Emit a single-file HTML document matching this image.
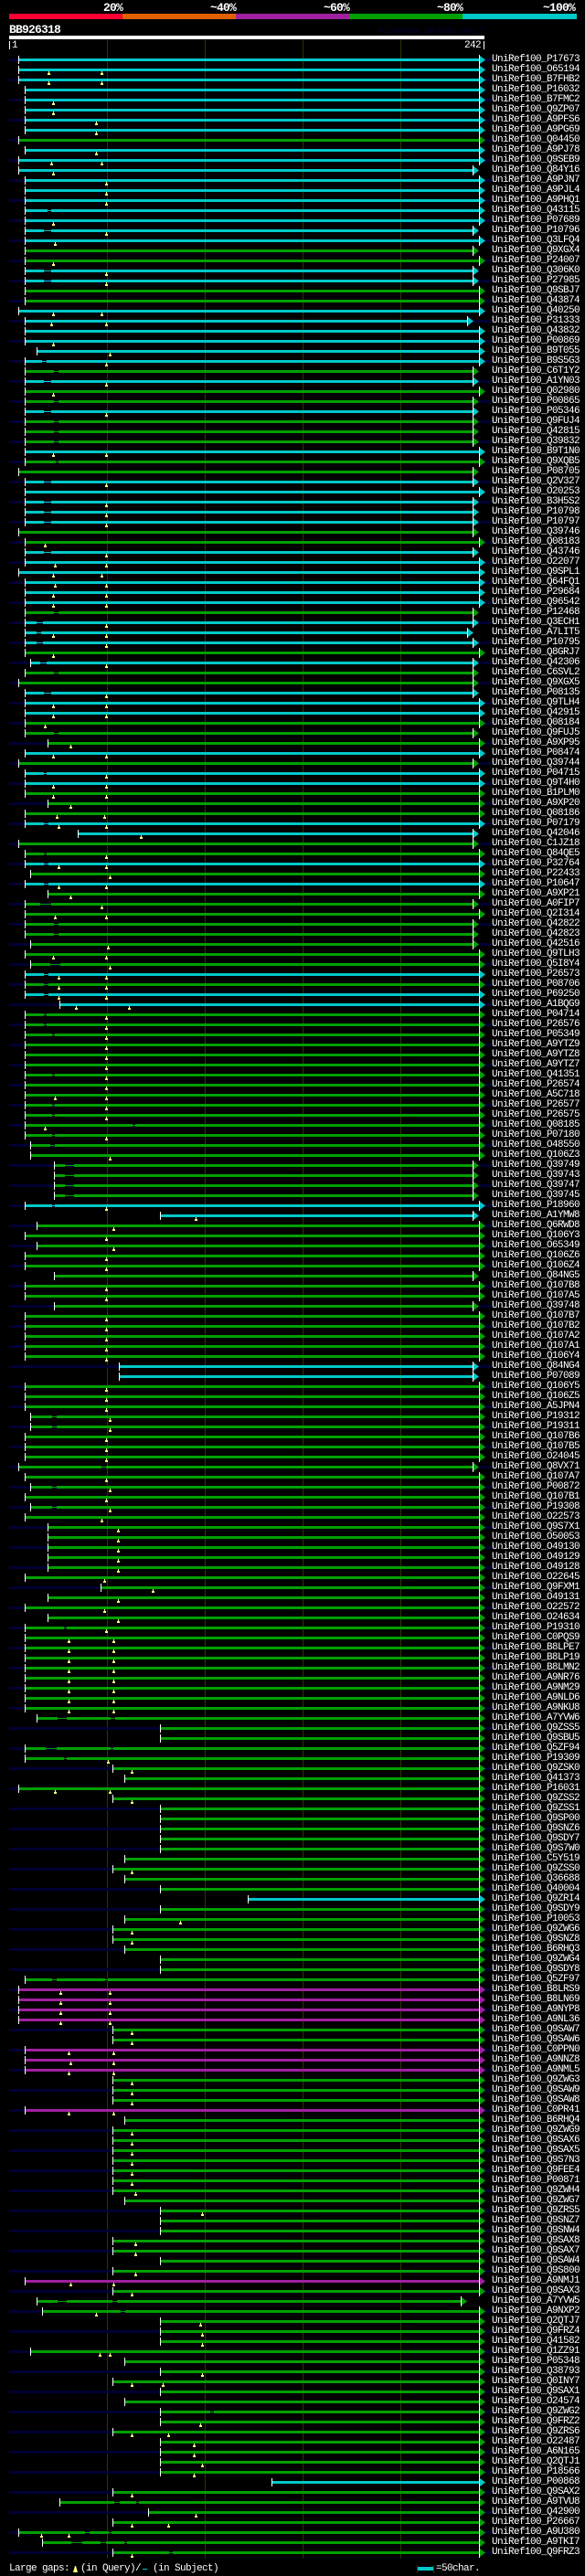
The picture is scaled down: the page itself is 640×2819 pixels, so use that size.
<!DOCTYPE html>
<html><head><meta charset="utf-8"><title>BB926318</title>
<style>
html,body{margin:0;padding:0;background:#000;}
#w{position:relative;width:640px;height:2819px;overflow:hidden;background:#000;color:#fff;font-family:"Liberation Mono",monospace;}
#w div{position:absolute;}
.h{font-weight:bold;font-size:13px;letter-spacing:-.8px;line-height:13px;white-space:pre;}
.t{font-size:11px;letter-spacing:-.6px;line-height:11px;white-space:pre;}
.v{width:1px;top:44px;height:2756px;background:#333300;}
#r{left:0;top:60px;width:640px;}
p{margin:0;position:relative;height:11px;padding-left:538px;font-size:11px;letter-spacing:-.6px;line-height:11px;white-space:pre;--e:524;--n:transparent;--b:#000;
background:linear-gradient(#fff,#fff) calc(var(--s)*1px) 1px/1px 9px no-repeat,
linear-gradient(var(--k),var(--k)) calc(var(--s)*1px + 1px) 4px/calc((var(--e) - var(--s) - 1)*1px) 3px no-repeat,
linear-gradient(var(--n),var(--n)) 10px 4px/528px 3px no-repeat;}
p:nth-child(odd){--n:#000033;--b:#000033;}
p::before{content:"";position:absolute;left:calc(var(--e)*1px);top:0;width:1px;height:11px;background:#fff;}
p::after{content:"";position:absolute;left:calc(var(--e)*1px + 1px);top:1px;width:6px;height:9px;background:var(--k);clip-path:polygon(0 0,100% 50%,0 100%);}
.c{--k:#00c8c8;}.g{--k:#00a000;}.m{--k:#a020a0;}
s{position:absolute;top:7px;width:1px;height:2px;background:#ffff80;text-decoration:none;}
s::after{content:"";position:absolute;left:-1px;top:2px;width:3px;height:2px;background:#ffff80;}
u{position:absolute;top:4px;height:3px;text-decoration:none;background:linear-gradient(var(--b) 1px,var(--k) 1px,var(--k) 2px,var(--b) 2px);}
</style></head><body><div id="w">
<div class="h" style="left:113px;top:2px">20%</div>
<div class="h" style="left:230px;top:2px">~40%</div>
<div class="h" style="left:354px;top:2px">~60%</div>
<div class="h" style="left:478px;top:2px">~80%</div>
<div class="h" style="left:594px;top:2px">~100%</div>
<div style="left:10px;top:15px;width:124px;height:6px;background:#ff0033"></div>
<div style="left:134px;top:15px;width:124px;height:6px;background:#e06000"></div>
<div style="left:258px;top:15px;width:124px;height:6px;background:#a020a0"></div>
<div style="left:382px;top:15px;width:124px;height:6px;background:#00a000"></div>
<div style="left:506px;top:15px;width:125px;height:6px;background:#00c8c8"></div>
<div class="h" style="left:10px;top:26px">BB926318</div>
<div style="left:414px;top:30px;font-size:9px;letter-spacing:-.4px;line-height:9px;color:#00003a;white-space:pre">AlignView.pm Beta rel.7</div>
<div style="left:10px;top:39px;width:520px;height:4px;background:#fff"></div>
<div style="left:10px;top:45px;width:1px;height:9px;background:#fff"></div>
<div class="t" style="left:13px;top:45px">1</div>
<div class="t" style="left:508px;top:45px">242</div>
<div style="left:529px;top:45px;width:1px;height:9px;background:#fff"></div>
<div class="v" style="left:117px"></div><div class="v" style="left:224px"></div><div class="v" style="left:331px"></div><div class="v" style="left:438px"></div>
<div id="r">
<p class=c style=--s:20>UniRef100_P17673</p>
<p class=c style=--s:20><s style=left:53px></s><s style=left:111px></s>UniRef100_O65194</p>
<p class=c style=--s:20><s style=left:53px></s><s style=left:111px></s>UniRef100_B7FHB2</p>
<p class=c style=--s:27>UniRef100_P16032</p>
<p class=c style=--s:27><s style=left:58px></s>UniRef100_B7FMC2</p>
<p class=c style=--s:27><s style=left:58px></s>UniRef100_Q9ZP07</p>
<p class=c style=--s:27><s style=left:105px></s>UniRef100_A9PFS6</p>
<p class=c style=--s:27><s style=left:105px></s>UniRef100_A9PG69</p>
<p class=g style=--s:20>UniRef100_Q04450</p>
<p class=c style=--s:27><s style=left:105px></s>UniRef100_A9PJ78</p>
<p class=c style=--s:20><s style=left:56px></s><s style=left:111px></s>UniRef100_Q9SEB9</p>
<p class=c style=--s:20;--e:517><s style=left:58px></s>UniRef100_Q84Y16</p>
<p class=c style=--s:27><s style=left:116px></s>UniRef100_A9PJN7</p>
<p class=c style=--s:27><s style=left:116px></s>UniRef100_A9PJL4</p>
<p class=c style=--s:27><s style=left:116px></s>UniRef100_A9PHQ1</p>
<p class=c style=--s:27><u style=left:52px;width:4px></u>UniRef100_Q43115</p>
<p class=c style=--s:27><s style=left:58px></s>UniRef100_P07689</p>
<p class=c style=--s:27;--e:517><u style=left:48px;width:8px></u><s style=left:116px></s>UniRef100_P10796</p>
<p class=c style=--s:27><s style=left:60px></s>UniRef100_Q3LFQ4</p>
<p class=g style=--s:27;--e:517>UniRef100_Q9XGX4</p>
<p class=g style=--s:27><s style=left:58px></s>UniRef100_P24007</p>
<p class=c style=--s:27;--e:517><u style=left:48px;width:8px></u><s style=left:116px></s>UniRef100_Q306K0</p>
<p class=c style=--s:27;--e:517><u style=left:48px;width:8px></u><s style=left:116px></s>UniRef100_P27985</p>
<p class=g style=--s:27>UniRef100_Q9SBJ7</p>
<p class=g style=--s:27>UniRef100_Q43874</p>
<p class=c style=--s:20><s style=left:58px></s><s style=left:111px></s>UniRef100_Q40250</p>
<p class=c style=--s:27;--e:511><s style=left:56px></s><s style=left:116px></s>UniRef100_P31333</p>
<p class=c style=--s:27>UniRef100_Q43832</p>
<p class=c style=--s:27><s style=left:58px></s>UniRef100_P00869</p>
<p class=c style=--s:40><s style=left:120px></s>UniRef100_B9T055</p>
<p class=c style=--s:27><u style=left:46px;width:5px></u><s style=left:116px></s>UniRef100_B9S5G3</p>
<p class=g style=--s:27;--e:517><u style=left:59px;width:5px></u>UniRef100_C6T1Y2</p>
<p class=c style=--s:27;--e:517><u style=left:48px;width:8px></u><s style=left:116px></s>UniRef100_A1YN03</p>
<p class=g style=--s:27><s style=left:58px></s>UniRef100_Q02980</p>
<p class=g style=--s:27;--e:517><u style=left:59px;width:5px></u>UniRef100_P00865</p>
<p class=c style=--s:27;--e:517><u style=left:48px;width:8px></u><s style=left:116px></s>UniRef100_P05346</p>
<p class=g style=--s:27;--e:517><u style=left:59px;width:5px></u>UniRef100_Q9FUJ4</p>
<p class=g style=--s:27;--e:517><u style=left:59px;width:5px></u>UniRef100_Q42815</p>
<p class=g style=--s:27;--e:517><u style=left:59px;width:5px></u>UniRef100_Q39832</p>
<p class=c style=--s:27><s style=left:58px></s><s style=left:116px></s>UniRef100_B9T1N0</p>
<p class=g style=--s:27><u style=left:61px;width:3px></u>UniRef100_Q9XQB5</p>
<p class=g style=--s:20;--e:517>UniRef100_P08705</p>
<p class=c style=--s:27;--e:517><u style=left:48px;width:8px></u><s style=left:116px></s>UniRef100_Q2V327</p>
<p class=c style=--s:27>UniRef100_O20253</p>
<p class=c style=--s:27;--e:517><u style=left:48px;width:8px></u><s style=left:116px></s>UniRef100_B3H5S2</p>
<p class=c style=--s:27;--e:517><u style=left:48px;width:8px></u><s style=left:116px></s>UniRef100_P10798</p>
<p class=c style=--s:27;--e:517><u style=left:48px;width:8px></u><s style=left:116px></s>UniRef100_P10797</p>
<p class=g style=--s:20;--e:517>UniRef100_Q39746</p>
<p class=g style=--s:27><s style=left:49px></s>UniRef100_Q08183</p>
<p class=c style=--s:27;--e:517><u style=left:48px;width:8px></u><s style=left:116px></s>UniRef100_Q43746</p>
<p class=c style=--s:27><s style=left:60px></s><s style=left:116px></s>UniRef100_O22077</p>
<p class=c style=--s:20><s style=left:58px></s><s style=left:111px></s>UniRef100_Q9SPL1</p>
<p class=c style=--s:27><s style=left:60px></s><s style=left:116px></s>UniRef100_Q64FQ1</p>
<p class=c style=--s:27><s style=left:58px></s><s style=left:116px></s>UniRef100_P29684</p>
<p class=c style=--s:27><s style=left:58px></s><s style=left:116px></s>UniRef100_Q96542</p>
<p class=g style=--s:27;--e:517><u style=left:59px;width:5px></u>UniRef100_P12468</p>
<p class=c style=--s:27;--e:517><u style=left:40px;width:7px></u><s style=left:116px></s>UniRef100_Q3ECH1</p>
<p class=c style=--s:27;--e:511><u style=left:40px;width:5px></u><s style=left:58px></s><s style=left:116px></s>UniRef100_A7LIT5</p>
<p class=c style=--s:27;--e:517><u style=left:40px;width:7px></u><s style=left:116px></s>UniRef100_P10795</p>
<p class=g style=--s:27><s style=left:58px></s>UniRef100_Q8GRJ7</p>
<p class=c style=--s:33;--e:517><u style=left:44px;width:7px></u><s style=left:116px></s>UniRef100_Q42306</p>
<p class=g style=--s:27;--e:517><u style=left:59px;width:5px></u>UniRef100_C6SVL2</p>
<p class=g style=--s:20;--e:517>UniRef100_Q9XGX5</p>
<p class=c style=--s:27;--e:517><u style=left:48px;width:8px></u><s style=left:116px></s>UniRef100_P08135</p>
<p class=c style=--s:27><s style=left:58px></s><s style=left:116px></s>UniRef100_Q9TLH4</p>
<p class=c style=--s:27><s style=left:58px></s><s style=left:116px></s>UniRef100_Q42915</p>
<p class=g style=--s:27><s style=left:49px></s>UniRef100_Q08184</p>
<p class=g style=--s:27;--e:517><u style=left:59px;width:5px></u>UniRef100_Q9FUJ5</p>
<p class=g style=--s:52><s style=left:77px></s>UniRef100_A9XP95</p>
<p class=c style=--s:27><s style=left:58px></s><s style=left:116px></s>UniRef100_P08474</p>
<p class=g style=--s:20;--e:517>UniRef100_Q39744</p>
<p class=c style=--s:27><u style=left:48px;width:3px></u><s style=left:116px></s>UniRef100_P04715</p>
<p class=c style=--s:27><s style=left:58px></s><s style=left:116px></s>UniRef100_Q9T4H0</p>
<p class=g style=--s:27><s style=left:58px></s><s style=left:116px></s>UniRef100_B1PLM0</p>
<p class=g style=--s:52><s style=left:77px></s>UniRef100_A9XP20</p>
<p class=g style=--s:27><s style=left:62px></s><s style=left:114px></s>UniRef100_Q08186</p>
<p class=c style=--s:27><u style=left:48px;width:5px></u><s style=left:64px></s><s style=left:116px></s>UniRef100_P07179</p>
<p class=c style=--s:85;--e:517><s style=left:154px></s>UniRef100_Q42046</p>
<p class=g style=--s:20;--e:517>UniRef100_C1JZ18</p>
<p class=g style=--s:27><u style=left:48px;width:3px></u><s style=left:116px></s>UniRef100_Q84QE5</p>
<p class=c style=--s:27><u style=left:48px;width:5px></u><s style=left:64px></s><s style=left:116px></s>UniRef100_P32764</p>
<p class=g style=--s:33><s style=left:120px></s>UniRef100_P22433</p>
<p class=c style=--s:27><u style=left:48px;width:5px></u><s style=left:64px></s><s style=left:116px></s>UniRef100_P10647</p>
<p class=g style=--s:52><s style=left:77px></s>UniRef100_A9XP21</p>
<p class=g style=--s:27;--e:517><u style=left:44px;width:12px></u><s style=left:111px></s>UniRef100_A0FIP7</p>
<p class=g style=--s:27><s style=left:60px></s><s style=left:116px></s>UniRef100_Q2I314</p>
<p class=g style=--s:27;--e:517><u style=left:59px;width:5px></u>UniRef100_Q42822</p>
<p class=g style=--s:27;--e:517><u style=left:59px;width:5px></u>UniRef100_Q42823</p>
<p class=g style=--s:33;--e:517><s style=left:118px></s>UniRef100_Q42516</p>
<p class=g style=--s:27><s style=left:58px></s><s style=left:116px></s>UniRef100_Q9TLH3</p>
<p class=g style=--s:33><u style=left:55px;width:11px></u><s style=left:120px></s>UniRef100_Q5I8Y4</p>
<p class=c style=--s:27><u style=left:48px;width:5px></u><s style=left:64px></s><s style=left:116px></s>UniRef100_P26573</p>
<p class=g style=--s:27><u style=left:48px;width:5px></u><s style=left:64px></s><s style=left:116px></s>UniRef100_P08706</p>
<p class=c style=--s:27><u style=left:48px;width:5px></u><s style=left:64px></s><s style=left:116px></s>UniRef100_P69250</p>
<p class=c style=--s:65><s style=left:83px></s><s style=left:141px></s>UniRef100_A1BQG9</p>
<p class=g style=--s:27><u style=left:48px;width:3px></u><s style=left:116px></s>UniRef100_P04714</p>
<p class=g style=--s:27><u style=left:48px;width:3px></u><s style=left:116px></s>UniRef100_P26576</p>
<p class=g style=--s:27><u style=left:57px;width:3px></u><s style=left:116px></s>UniRef100_P05349</p>
<p class=g style=--s:27><s style=left:116px></s>UniRef100_A9YTZ9</p>
<p class=g style=--s:27><s style=left:116px></s>UniRef100_A9YTZ8</p>
<p class=g style=--s:27><s style=left:116px></s>UniRef100_A9YTZ7</p>
<p class=g style=--s:27><u style=left:57px;width:3px></u><s style=left:116px></s>UniRef100_Q41351</p>
<p class=g style=--s:27><s style=left:116px></s>UniRef100_P26574</p>
<p class=g style=--s:27><s style=left:60px></s><s style=left:116px></s>UniRef100_A5C718</p>
<p class=g style=--s:27><u style=left:57px;width:3px></u><s style=left:116px></s>UniRef100_P26577</p>
<p class=g style=--s:27><u style=left:57px;width:3px></u><s style=left:116px></s>UniRef100_P26575</p>
<p class=g style=--s:27><u style=left:145px;width:3px></u><s style=left:49px></s>UniRef100_Q08185</p>
<p class=g style=--s:27><u style=left:57px;width:3px></u><s style=left:116px></s>UniRef100_P07180</p>
<p class=g style=--s:33><u style=left:55px;width:5px></u>UniRef100_O48550</p>
<p class=g style=--s:33><s style=left:120px></s>UniRef100_Q106Z3</p>
<p class=g style=--s:59;--e:517><u style=left:71px;width:10px></u>UniRef100_Q39749</p>
<p class=g style=--s:59;--e:517><u style=left:71px;width:10px></u>UniRef100_Q39743</p>
<p class=g style=--s:59;--e:517><u style=left:71px;width:10px></u>UniRef100_Q39747</p>
<p class=g style=--s:59;--e:517><u style=left:71px;width:10px></u>UniRef100_Q39745</p>
<p class=c style=--s:27><u style=left:57px;width:3px></u><s style=left:116px></s>UniRef100_P18960</p>
<p class=c style=--s:175;--e:517><s style=left:214px></s>UniRef100_A1YMW8</p>
<p class=g style=--s:40><s style=left:124px></s>UniRef100_Q6RWD8</p>
<p class=g style=--s:27><s style=left:116px></s>UniRef100_Q106Y3</p>
<p class=g style=--s:40><s style=left:124px></s>UniRef100_O65349</p>
<p class=g style=--s:27><s style=left:116px></s>UniRef100_Q106Z6</p>
<p class=g style=--s:27><s style=left:116px></s>UniRef100_Q106Z4</p>
<p class=g style=--s:59;--e:517>UniRef100_Q84NG5</p>
<p class=g style=--s:27><s style=left:116px></s>UniRef100_Q107B8</p>
<p class=g style=--s:27><s style=left:116px></s>UniRef100_Q107A5</p>
<p class=g style=--s:59;--e:517>UniRef100_Q39748</p>
<p class=g style=--s:27><s style=left:116px></s>UniRef100_Q107B7</p>
<p class=g style=--s:27><s style=left:116px></s>UniRef100_Q107B2</p>
<p class=g style=--s:27><s style=left:116px></s>UniRef100_Q107A2</p>
<p class=g style=--s:27><s style=left:116px></s>UniRef100_Q107A1</p>
<p class=g style=--s:27><s style=left:116px></s>UniRef100_Q106Y4</p>
<p class=c style=--s:130;--e:517>UniRef100_Q84NG4</p>
<p class=c style=--s:130;--e:517>UniRef100_P07089</p>
<p class=g style=--s:27><s style=left:116px></s>UniRef100_Q106Y5</p>
<p class=g style=--s:27><s style=left:116px></s>UniRef100_Q106Z5</p>
<p class=g style=--s:27><s style=left:116px></s>UniRef100_A5JPN4</p>
<p class=g style=--s:33><u style=left:57px;width:5px></u><s style=left:120px></s>UniRef100_P19312</p>
<p class=g style=--s:33><u style=left:57px;width:5px></u><s style=left:120px></s>UniRef100_P19311</p>
<p class=g style=--s:27><s style=left:116px></s>UniRef100_Q107B6</p>
<p class=g style=--s:27><s style=left:116px></s>UniRef100_Q107B5</p>
<p class=g style=--s:27><s style=left:116px></s>UniRef100_O24045</p>
<p class=g style=--s:20;--e:517><u style=left:111px;width:5px></u>UniRef100_Q8VX71</p>
<p class=g style=--s:27><s style=left:116px></s>UniRef100_Q107A7</p>
<p class=g style=--s:33><u style=left:57px;width:5px></u><s style=left:120px></s>UniRef100_P00872</p>
<p class=g style=--s:27><s style=left:116px></s>UniRef100_Q107B1</p>
<p class=g style=--s:33><u style=left:57px;width:5px></u><s style=left:120px></s>UniRef100_P19308</p>
<p class=g style=--s:27><s style=left:111px></s>UniRef100_O22573</p>
<p class=g style=--s:52><s style=left:129px></s>UniRef100_Q9S7X1</p>
<p class=g style=--s:52><s style=left:129px></s>UniRef100_O50053</p>
<p class=g style=--s:52><s style=left:129px></s>UniRef100_O49130</p>
<p class=g style=--s:52><s style=left:129px></s>UniRef100_O49129</p>
<p class=g style=--s:52><s style=left:129px></s>UniRef100_O49128</p>
<p class=g style=--s:27><s style=left:114px></s>UniRef100_O22645</p>
<p class=g style=--s:110><s style=left:167px></s>UniRef100_Q9FXM1</p>
<p class=g style=--s:52><s style=left:129px></s>UniRef100_O49131</p>
<p class=g style=--s:27><s style=left:114px></s>UniRef100_O22572</p>
<p class=g style=--s:52><s style=left:129px></s>UniRef100_O24634</p>
<p class=g style=--s:27><u style=left:70px;width:3px></u><s style=left:116px></s>UniRef100_P19310</p>
<p class=g style=--s:27><s style=left:75px></s><s style=left:124px></s>UniRef100_C0PQS9</p>
<p class=g style=--s:27><s style=left:75px></s><s style=left:124px></s>UniRef100_B8LPE7</p>
<p class=g style=--s:27><s style=left:75px></s><s style=left:124px></s>UniRef100_B8LP19</p>
<p class=g style=--s:27><s style=left:75px></s><s style=left:124px></s>UniRef100_B8LMN2</p>
<p class=g style=--s:27><s style=left:75px></s><s style=left:124px></s>UniRef100_A9NR76</p>
<p class=g style=--s:27><s style=left:75px></s><s style=left:124px></s>UniRef100_A9NM29</p>
<p class=g style=--s:27><s style=left:75px></s><s style=left:124px></s>UniRef100_A9NLD6</p>
<p class=g style=--s:27><s style=left:75px></s><s style=left:124px></s>UniRef100_A9NKU8</p>
<p class=g style=--s:40><u style=left:63px;width:10px></u><u style=left:121px;width:5px></u>UniRef100_A7YVW6</p>
<p class=g style=--s:175>UniRef100_Q9ZSS5</p>
<p class=g style=--s:175>UniRef100_Q9SBU5</p>
<p class=g style=--s:27><u style=left:50px;width:12px></u><u style=left:121px;width:3px></u>UniRef100_Q5ZF94</p>
<p class=g style=--s:27><u style=left:70px;width:3px></u><s style=left:118px></s>UniRef100_P19309</p>
<p class=g style=--s:123><s style=left:144px></s>UniRef100_Q9ZSK0</p>
<p class=g style=--s:136>UniRef100_Q41373</p>
<p class=g style=--s:20><s style=left:60px></s><s style=left:120px></s>UniRef100_P16031</p>
<p class=g style=--s:123><s style=left:144px></s>UniRef100_Q9ZSS2</p>
<p class=g style=--s:175>UniRef100_Q9ZSS1</p>
<p class=g style=--s:175>UniRef100_Q9SP00</p>
<p class=g style=--s:175>UniRef100_Q9SNZ6</p>
<p class=g style=--s:175>UniRef100_Q9SDY7</p>
<p class=g style=--s:175>UniRef100_Q9S7W0</p>
<p class=g style=--s:136>UniRef100_C5Y519</p>
<p class=g style=--s:123><s style=left:144px></s>UniRef100_Q9ZSS0</p>
<p class=g style=--s:136>UniRef100_Q36688</p>
<p class=g style=--s:175>UniRef100_Q40004</p>
<p class=c style=--s:271>UniRef100_Q9ZRI4</p>
<p class=g style=--s:175>UniRef100_Q9SDY9</p>
<p class=g style=--s:136><s style=left:197px></s>UniRef100_P10053</p>
<p class=g style=--s:123><s style=left:144px></s>UniRef100_Q9ZWG6</p>
<p class=g style=--s:123><s style=left:144px></s>UniRef100_Q9SNZ8</p>
<p class=g style=--s:136>UniRef100_B6RHQ3</p>
<p class=g style=--s:175>UniRef100_Q9ZWG4</p>
<p class=g style=--s:175>UniRef100_Q9SDY8</p>
<p class=g style=--s:27><u style=left:57px;width:5px></u><u style=left:115px;width:3px></u>UniRef100_Q5ZF97</p>
<p class=m style=--s:20><s style=left:66px></s><s style=left:120px></s>UniRef100_B8LRS9</p>
<p class=m style=--s:20><s style=left:66px></s><s style=left:120px></s>UniRef100_B8LN69</p>
<p class=m style=--s:20><s style=left:66px></s><s style=left:120px></s>UniRef100_A9NYP8</p>
<p class=m style=--s:20><s style=left:66px></s><s style=left:120px></s>UniRef100_A9NL36</p>
<p class=g style=--s:123><s style=left:144px></s>UniRef100_Q9SAW7</p>
<p class=g style=--s:123><s style=left:144px></s>UniRef100_Q9SAW6</p>
<p class=m style=--s:27><s style=left:75px></s><s style=left:124px></s>UniRef100_C0PPN0</p>
<p class=m style=--s:27><s style=left:77px></s><s style=left:124px></s>UniRef100_A9NNZ8</p>
<p class=m style=--s:27><s style=left:75px></s><s style=left:124px></s>UniRef100_A9NML5</p>
<p class=g style=--s:123><s style=left:144px></s>UniRef100_Q9ZWG3</p>
<p class=g style=--s:123><s style=left:144px></s>UniRef100_Q9SAW9</p>
<p class=g style=--s:123><s style=left:144px></s>UniRef100_Q9SAW8</p>
<p class=m style=--s:27><s style=left:75px></s><s style=left:124px></s>UniRef100_C0PR41</p>
<p class=g style=--s:136>UniRef100_B6RHQ4</p>
<p class=g style=--s:123><s style=left:144px></s>UniRef100_Q9ZWG9</p>
<p class=g style=--s:123><s style=left:144px></s>UniRef100_Q9SAX6</p>
<p class=g style=--s:123><s style=left:144px></s>UniRef100_Q9SAX5</p>
<p class=g style=--s:123><s style=left:144px></s>UniRef100_Q9S7N3</p>
<p class=g style=--s:123><s style=left:144px></s>UniRef100_Q9FEE4</p>
<p class=g style=--s:123><s style=left:144px></s>UniRef100_P00871</p>
<p class=g style=--s:123><s style=left:148px></s>UniRef100_Q9ZWH4</p>
<p class=g style=--s:136>UniRef100_Q9ZWG7</p>
<p class=g style=--s:175><s style=left:221px></s>UniRef100_Q9ZRS5</p>
<p class=g style=--s:175>UniRef100_Q9SNZ7</p>
<p class=g style=--s:175>UniRef100_Q9SNW4</p>
<p class=g style=--s:123><s style=left:148px></s>UniRef100_Q9SAX8</p>
<p class=g style=--s:123><s style=left:148px></s>UniRef100_Q9SAX7</p>
<p class=g style=--s:175>UniRef100_Q9SAW4</p>
<p class=g style=--s:123><s style=left:148px></s>UniRef100_Q9S800</p>
<p class=m style=--s:27><s style=left:77px></s><s style=left:124px></s>UniRef100_A9NMJ1</p>
<p class=g style=--s:123><s style=left:144px></s>UniRef100_Q9SAX3</p>
<p class=g style=--s:40;--e:504><u style=left:63px;width:10px></u><u style=left:123px;width:5px></u>UniRef100_A7YVW5</p>
<p class=g style=--s:46><u style=left:132px;width:5px></u><s style=left:105px></s>UniRef100_A9NXP2</p>
<p class=g style=--s:175><s style=left:219px></s>UniRef100_Q2QTJ7</p>
<p class=g style=--s:175><s style=left:221px></s>UniRef100_Q9FRZ4</p>
<p class=g style=--s:175><s style=left:221px></s>UniRef100_Q41582</p>
<p class=g style=--s:33><s style=left:109px></s><s style=left:120px></s>UniRef100_Q1ZZ91</p>
<p class=g style=--s:136>UniRef100_P05348</p>
<p class=g style=--s:175><s style=left:221px></s>UniRef100_Q38793</p>
<p class=g style=--s:123><s style=left:144px></s><s style=left:178px></s>UniRef100_Q0INY7</p>
<p class=g style=--s:175>UniRef100_Q9SAX1</p>
<p class=g style=--s:136>UniRef100_O24574</p>
<p class=g style=--s:175><u style=left:230px;width:4px></u>UniRef100_Q9ZWG2</p>
<p class=g style=--s:175><s style=left:219px></s>UniRef100_Q9FRZ2</p>
<p class=g style=--s:123><s style=left:144px></s><s style=left:184px></s>UniRef100_Q9ZRS6</p>
<p class=g style=--s:175><s style=left:212px></s>UniRef100_O22487</p>
<p class=g style=--s:175><s style=left:212px></s>UniRef100_A6N165</p>
<p class=g style=--s:175><s style=left:221px></s>UniRef100_Q2QTJ1</p>
<p class=g style=--s:175><s style=left:212px></s>UniRef100_P18566</p>
<p class=c style=--s:297>UniRef100_P00868</p>
<p class=g style=--s:123><s style=left:144px></s>UniRef100_Q9SAX2</p>
<p class=g style=--s:65><u style=left:125px;width:6px></u><u style=left:149px;width:3px></u>UniRef100_A9TVU8</p>
<p class=g style=--s:162><s style=left:214px></s>UniRef100_Q42900</p>
<p class=g style=--s:123><s style=left:144px></s><s style=left:184px></s>UniRef100_P26667</p>
<p class=g style=--s:20><u style=left:93px;width:5px></u><u style=left:119px;width:3px></u><s style=left:45px></s><s style=left:75px></s>UniRef100_A9U380</p>
<p class=g style=--s:46><u style=left:78px;width:12px></u><u style=left:110px;width:6px></u><u style=left:136px;width:3px></u>UniRef100_A9TKI7</p>
<p class=g style=--s:123><u style=left:185px;width:4px></u><s style=left:144px></s>UniRef100_Q9FRZ3</p>
</div>
<div class="t" style="left:10px;top:2806px">Large gaps:</div>
<div style="left:80px;top:2808px;width:5px;height:7px;background:#ffff80;clip-path:polygon(40% 0,60% 0,100% 100%,0 100%)"></div>
<div class="t" style="left:88px;top:2806px">(in Query)/</div>
<div style="left:156px;top:2811px;width:5px;height:1px;background:#00c8c8"></div>
<div class="t" style="left:167px;top:2806px">(in Subject)</div>
<div style="left:456px;top:2807px;width:1px;height:9px;background:#333300"></div>
<div style="left:457px;top:2809px;width:17px;height:4px;background:#00c8c8"></div>
<div style="left:474px;top:2807px;width:1px;height:9px;background:#333300"></div>
<div class="t" style="left:477px;top:2806px">=50char.</div>
</div></body></html>
